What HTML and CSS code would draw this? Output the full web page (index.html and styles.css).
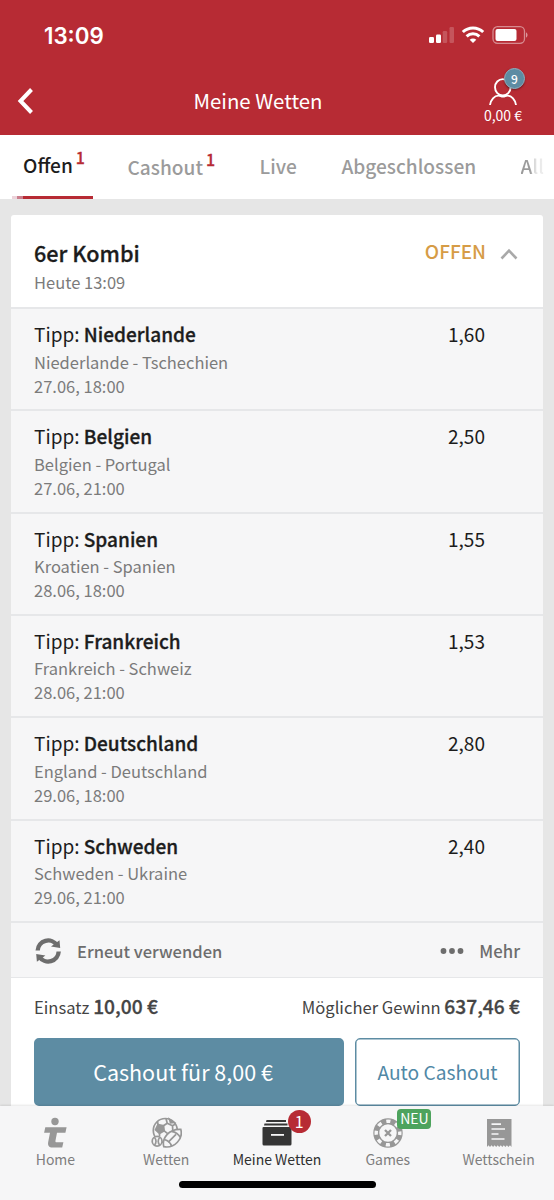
FILE: index.html
```html
<!DOCTYPE html>
<html lang="de">
<head>
  <meta charset="utf-8">
  <meta name="viewport" content="width=device-width, initial-scale=1">
  <title>Meine Wetten</title>
  <link rel="stylesheet" href="styles.css">
</head>
<body>
  <div class="app">
    <header class="header">
      <div class="status-bar">
        <span class="clock">13:09</span>
        <svg class="status-icons" width="100" height="20" viewBox="0 0 100 20">
          <g fill="#fff">
            <rect x="1" y="12" width="5" height="6" rx="1.2"/>
            <rect x="8" y="9.5" width="5" height="8.5" rx="1.2"/>
            <rect x="14.7" y="6" width="4.5" height="12" rx="1.2" opacity=".2"/>
            <rect x="21.5" y="2" width="4.5" height="16" rx="1.2" opacity=".2"/>
            <path d="M45 18l-3.300-3.300c1.800-1.600 4.800-1.600 6.600 0z"/>
            <rect x="67.500" y="4" width="21" height="12" rx="2"/>
            <path d="M98 7.500v5c2-.5 2-4.500 0-5z" opacity=".5"/>
          </g>
          <path d="M34.800 7c5.700-5.500 14.700-5.500 20.400 0M38.600 11.300c3.600-3.400 9.200-3.400 12.800 0" fill="none" stroke="#fff" stroke-width="3"/>
          <rect x="65" y="1.700" width="31.500" height="16.600" rx="4.500" fill="none" stroke="#fff" stroke-opacity=".45" stroke-width="1.300"/>
        </svg>
      </div>
      <div class="title-bar">
        <a class="back" href="#" aria-label="Zurück">
          <svg width="18" height="26" viewBox="0 0 18 26"><path d="M14.500 1.500L3.500 13l11 11.500" fill="none" stroke="#fff" stroke-width="4"/></svg>
        </a>
        <h1>Meine Wetten</h1>
        <div class="account">
          <svg width="28" height="28" viewBox="0 0 28 28" fill="none" stroke="#fff" stroke-width="1.900">
            <ellipse cx="13.800" cy="9.300" rx="7.800" ry="8.200"/>
            <path d="M1 27c.6-5.400 4.600-9.400 8.400-9.400 2.600 0 2.200.9 4.600.9s2-.9 4.600-.9c3.800 0 7.800 4 8.400 9.400"/>
          </svg>
          <span class="account-badge">9</span>
          <span class="balance">0,00 €</span>
        </div>
      </div>
    </header>

    <nav class="tabs">
      <a class="tab active" href="#">Offen<sup>1</sup></a>
      <a class="tab" href="#">Cashout<sup>1</sup></a>
      <a class="tab" href="#">Live</a>
      <a class="tab" href="#">Abgeschlossen</a>
      <a class="tab" href="#">All</a>
    </nav>

    <main class="content">
      <section class="card">
        <div class="card-header">
          <div>
            <h2>6er Kombi</h2>
            <p class="muted">Heute 13:09</p>
          </div>
          <div class="state">
            <span>OFFEN</span>
            <svg width="18" height="12" viewBox="0 0 18 12"><path d="M1.500 10.500L9 2.700l7.500 7.800" fill="none" stroke="#a9a9a9" stroke-width="2.600"/></svg>
          </div>
        </div>

        <div class="bet">
          <div>
            <h3>Tipp: <b>Niederlande</b></h3>
            <p class="muted">Niederlande - Tschechien</p>
            <p class="muted">27.06, 18:00</p>
          </div>
          <span class="odds">1,60</span>
        </div>
        <div class="bet">
          <div>
            <h3>Tipp: <b>Belgien</b></h3>
            <p class="muted">Belgien - Portugal</p>
            <p class="muted">27.06, 21:00</p>
          </div>
          <span class="odds">2,50</span>
        </div>
        <div class="bet">
          <div>
            <h3>Tipp: <b>Spanien</b></h3>
            <p class="muted">Kroatien - Spanien</p>
            <p class="muted">28.06, 18:00</p>
          </div>
          <span class="odds">1,55</span>
        </div>
        <div class="bet">
          <div>
            <h3>Tipp: <b>Frankreich</b></h3>
            <p class="muted">Frankreich - Schweiz</p>
            <p class="muted">28.06, 21:00</p>
          </div>
          <span class="odds">1,53</span>
        </div>
        <div class="bet">
          <div>
            <h3>Tipp: <b>Deutschland</b></h3>
            <p class="muted">England - Deutschland</p>
            <p class="muted">29.06, 18:00</p>
          </div>
          <span class="odds">2,80</span>
        </div>
        <div class="bet">
          <div>
            <h3>Tipp: <b>Schweden</b></h3>
            <p class="muted">Schweden - Ukraine</p>
            <p class="muted">29.06, 21:00</p>
          </div>
          <span class="odds">2,40</span>
        </div>

        <div class="actions">
          <a class="action" href="#">
            <svg width="28" height="28" viewBox="0 0 28 28">
              <g fill="none" stroke="#6d6d6d" stroke-width="4.400">
                <path d="M3.700 13.500A10.500 10.500 0 0 1 23 8.300"/>
                <path d="M24.700 14.500A10.500 10.500 0 0 1 5.400 19.700"/>
              </g>
              <path d="M25.500 3.300l.7 7.700-9.200-1.500zM2.900 24.700L2.200 17l9.200 1.500z" fill="#6d6d6d"/>
            </svg>
            Erneut verwenden
          </a>
          <a class="action more" href="#">
            <svg width="24" height="8" viewBox="0 0 24 8" fill="#6d6d6d"><circle cx="3.500" cy="4" r="2.900"/><circle cx="12" cy="4" r="2.900"/><circle cx="20.500" cy="4" r="2.900"/></svg>
            Mehr
          </a>
        </div>

        <div class="totals">
          <span>Einsatz <b>10,00 €</b></span>
          <span>Möglicher Gewinn <b>637,46 €</b></span>
        </div>

        <div class="buttons">
          <button class="btn primary">Cashout für 8,00 €</button>
          <button class="btn secondary">Auto Cashout</button>
        </div>
      </section>
    </main>

    <footer class="bottom-nav">
      <div class="nav-items">
        <a class="nav-item" href="#">
          <svg width="32" height="32" viewBox="0 0 32 32" fill="#979797">
            <circle cx="16" cy="4.500" r="3.700"/>
            <path d="M6.300 10.200H27.600l-1.200 5.600H18l-1.500 7.700c-.3 1.300.2 1.800 1.300 1.800h6.600l-1.200 5.200H13.500c-3.500 0-5-2-4.300-5.500l1.800-9.200H5.100z"/>
          </svg>
          Home
        </a>
        <a class="nav-item" href="#">
          <svg width="32" height="32" viewBox="0 0 32 32" fill="none" stroke="#979797" stroke-width="1.700">
            <circle cx="15.300" cy="13.500" r="12"/>
            <path d="M8 7.500l5.500 1.300.7 5-4.700 2.700-4-3.800z" fill="#979797"/>
            <path d="M13.500 8.800l3.700-2.600 5.300 2.500.3 5M17.200 6.200L16 1.500M8 7.500l-.5-3M14.200 13.800l3.800 3M22.500 8.700l3.500-2M9.500 16.500v3"/>
            <path d="M19.500 2.300l4.500 3-3.500.4z" fill="#979797"/>
            <circle cx="7.100" cy="24.200" r="4.900" fill="#f6f6f7"/>
            <path d="M4.500 20.500c2 2 2 5.500 0 7.500M9.700 20.500c-2 2-2 5.500 0 7.500"/>
            <path d="M13.800 29.700c-2.300-8.500 5.200-18 17-17.300 2.500 9.300-6 19.300-17 17.300z" fill="#f6f6f7"/>
            <path d="M14.200 22.500c4 1 6.500 3.300 7.300 6.800M21.500 14.300c4.500.7 7.300 3 8.800 6.200M18 25.300l8-8"/>
          </svg>
          Wetten
        </a>
        <a class="nav-item active" href="#">
          <svg width="32" height="32" viewBox="0 0 32 32" fill="#353535">
            <path d="M5.500 3H25v2H5zM3.500 6.500h23v2H3zM2.500 10h27q1 0 1 1v16q0 1.500-1.500 1.500H3q-1.500 0-1.500-1.500V11q0-1 1-1z"/>
            <path d="M10 17h13v1.800H10z" fill="#f6f6f7"/>
          </svg>
          <span class="count-badge">1</span>
          Meine Wetten
        </a>
        <a class="nav-item" href="#">
          <svg width="32" height="32" viewBox="0 0 32 32" fill="none" stroke="#979797">
            <circle cx="16" cy="16" r="11.700" stroke-width="6"/>
            <circle cx="16" cy="16" r="11.800" stroke="#f6f6f7" stroke-width="3.400" stroke-dasharray="4.200 5.067" stroke-dashoffset="2.100"/>
            <path d="M13 13l6 6M19 13l-6 6" stroke-width="2.300"/>
          </svg>
          <span class="new-badge">NEU</span>
          Games
        </a>
        <a class="nav-item" href="#">
          <svg width="32" height="32" viewBox="0 0 32 32">
            <path d="M4 2h24.500v28l-1.500-1.700-1.600 1.700-1.500-1.700-1.500 1.700-1.600-1.700-1.500 1.700-1.500-1.700-1.600 1.700-1.500-1.700-1.500 1.700-1.600-1.700-1.500 1.700-1.500-1.700-1.600 1.700-1.500-1.700L4 30z" fill="#979797"/>
            <path d="M8.500 7.200H18M8.500 12H22M8.500 17H15.500M8.500 22H21.500" fill="none" stroke="#f6f6f7" stroke-width="1.700"/>
          </svg>
          Wettschein
        </a>
      </div>
      <div class="home-indicator"></div>
    </footer>
  </div>
</body>
</html>
```

FILE: styles.css
```css
:root {
  --red: #b72b34;
  --blue: #5d8ca3;
  --green: #4da35d;
  --orange: #d69c46;
  --bg: #e6e6e6;
  --panel: #f6f6f7;
  --line: #e6e7e9;
  --text: #1c1c1c;
  --muted: #7b7b7b;
  --font: "Noto Sans CJK SC", "Noto Sans", sans-serif;
}

* {
  margin: 0;
  padding: 0;
  box-sizing: border-box;
}

body {
  font-family: var(--font);
  background: var(--bg);
  color: var(--text);
}

a {
  color: inherit;
  text-decoration: none;
}

svg {
  display: block;
  flex: none;
}

.app {
  display: flex;
  flex-direction: column;
  height: 1200px;
  overflow: hidden;
}

/* header */
.header {
  flex: none;
  height: 135px;
  background: var(--red);
  color: #fff;
}

.status-bar {
  display: flex;
  justify-content: space-between;
  align-items: center;
  height: 70px;
  padding: 0 26px 0 44px;
}

.clock {
  font-family: Inter, sans-serif;
  font-size: 22.300px;
  font-weight: 600;
}

.title-bar {
  display: grid;
  grid-template-columns: 60px 1fr 94px;
  align-items: center;
  height: 62px;
  padding: 0 21px 0 17px;
}

.title-bar h1 {
  margin-top: -3px;
  font-size: 20.400px;
  font-weight: 400;
  line-height: 28px;
  text-align: center;
}

.account {
  position: relative;
  display: flex;
  flex-direction: column;
  align-items: center;
  justify-self: end;
  width: 60px;
}

.account-badge {
  position: absolute;
  top: -10px;
  left: 31px;
  width: 21px;
  height: 21px;
  border: 1px solid #8fb0c0;
  border-radius: 50%;
  background: var(--blue);
  box-shadow: 0 1px 2px rgba(0, 0, 0, 0.4);
  font-size: 12px;
  font-weight: 500;
  line-height: 19px;
  text-align: center;
}

.balance {
  margin-top: -1px;
  font-size: 14px;
  line-height: 20px;
  white-space: nowrap;
}

/* tabs */
.tabs {
  display: flex;
  flex: none;
  gap: 44.500px;
  height: 64px;
  padding-left: 12px;
  background: #fff;
  overflow: hidden;
}

.tab {
  flex: none;
  padding-top: 16px;
  font-size: 19.100px;
  font-weight: 500;
  line-height: 30px;
  color: #9b9b9b;
}

.tab sup {
  display: inline-block;
  margin-left: 3px;
  font-size: 16px;
  line-height: 16px;
  color: var(--red);
  vertical-align: 9px;
  -webkit-text-stroke: 0.3px;
}

.tab.active {
  width: 81px;
  margin-right: -10px;
  padding: 14px 0 0 11px;
  border-bottom: 3px solid;
  border-image: linear-gradient(90deg, #ecd3da 8px, #cb7f8d 8px, #cb7f8d 13px, var(--red) 13px) 3;
  color: var(--text);
}

.tab:last-child {
  background: linear-gradient(90deg, #9b9b9b 9px, #e4e4e4 15px, #f0f0f0 24px);
  background-clip: text;
  color: transparent;
}

/* bet card */
.content {
  flex: 1;
  min-height: 0;
  padding: 16px 11px 0;
  overflow: hidden;
}

.card {
  background: #fff;
  border-radius: 3px;
}

.card-header {
  display: flex;
  justify-content: space-between;
  height: 92px;
  padding: 22px 25px 0 23px;
}

.card-header h2 {
  margin-bottom: 1px;
  font-size: 21.600px;
  font-weight: 500;
  line-height: 32px;
  -webkit-text-stroke: 0.3px;
}

.state {
  display: flex;
  gap: 14px;
  font-size: 19px;
  font-weight: 500;
  line-height: 28px;
  color: var(--orange);
}

.state svg {
  margin-top: 11px;
}

.muted {
  font-size: 16.500px;
  line-height: 24px;
  color: var(--muted);
}

.bet {
  display: flex;
  justify-content: space-between;
  height: 102.330px;
  padding: 11px 58px 0 23px;
  background: var(--panel);
  border-top: 2px solid var(--line);
}

.bet h3,
.odds {
  font-size: 19.050px;
  font-weight: 400;
  line-height: 27px;
}

.bet h3 {
  margin-bottom: 2.500px;
}

b {
  font-weight: 500;
  -webkit-text-stroke: 0.3px;
}

.actions {
  display: flex;
  justify-content: space-between;
  align-items: center;
  height: 57px;
  padding: 2px 23px 0;
  background: var(--panel);
  border-top: 2px solid var(--line);
  border-bottom: 1px solid var(--line);
}

.action {
  display: flex;
  align-items: center;
  gap: 15px;
  font-size: 16.500px;
  font-weight: 500;
  line-height: 26px;
  color: #6d6d6d;
}

.action.more {
  font-size: 16.800px;
}

.totals {
  display: flex;
  justify-content: space-between;
  height: 60px;
  padding: 13px 23px 0;
  font-size: 16.600px;
  line-height: 30px;
  color: #444;
}

.totals b {
  font-size: 19.200px;
}

.buttons {
  display: flex;
  gap: 11px;
  padding: 0 23px 30px;
}

.btn {
  height: 68px;
  border: 2px solid var(--blue);
  border-radius: 5px;
  font-family: var(--font);
}

.btn.primary {
  flex: 1;
  padding-right: 12px;
  background: var(--blue);
  color: #fff;
  font-size: 21.500px;
}

.btn.secondary {
  width: 165px;
  border-width: 1px;
  box-shadow: inset 0 0 0 0.500px var(--blue);
  background: #fff;
  color: #5088a6;
  font-size: 19.200px;
}

/* bottom navigation */
.bottom-nav {
  position: relative;
  flex: none;
  height: 94px;
  padding-top: 11px;
  background: var(--panel);
  box-shadow: 0 -1px 2px rgba(0, 0, 0, 0.1);
}

.nav-items {
  display: grid;
  grid-template-columns: repeat(5, 1fr);
}

.nav-item {
  position: relative;
  display: flex;
  flex-direction: column;
  align-items: center;
  font-size: 14px;
  line-height: 20px;
  color: #7e7e7e;
}

.nav-item.active {
  color: #303030;
}

.count-badge {
  position: absolute;
  top: -7px;
  left: 66px;
  width: 23px;
  height: 23px;
  border-radius: 50%;
  background: var(--red);
  color: #fff;
  font-size: 16px;
  line-height: 22px;
  text-align: center;
}

.new-badge {
  position: absolute;
  top: -8px;
  left: 65px;
  width: 34px;
  height: 20px;
  border-radius: 4px;
  background: var(--green);
  color: #fff;
  font-size: 14px;
  line-height: 19px;
  text-align: center;
}

.home-indicator {
  width: 197px;
  height: 7px;
  margin: 12px auto 0;
  border-radius: 4px;
  background: #000;
}
```
